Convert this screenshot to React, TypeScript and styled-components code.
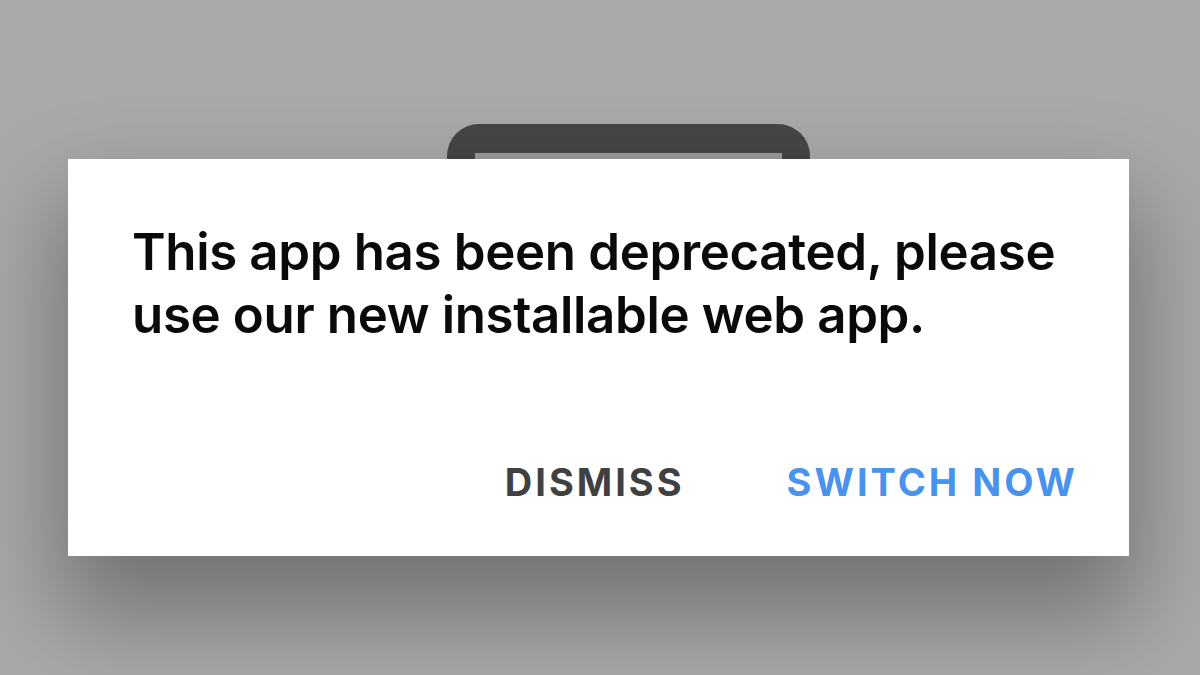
import React from "react";
import styled, { createGlobalStyle } from "styled-components";

const Global = createGlobalStyle`
  html, body { margin: 0; padding: 0; }
  body { width: 1200px; height: 675px; overflow: hidden; background: #a9a9a9; }
`;

const Page = styled.div`
  position: relative;
  width: 1200px;
  height: 675px;
  background: #a9a9a9;
  display: flex;
  justify-content: flex-start;
  align-items: flex-start;
  padding-left: 447px;
  padding-top: 124px;
  box-sizing: border-box;
  overflow: hidden;
`;

const Phone = styled.div`
  width: 363px;
  height: 120px;
  background: #464646;
  border-radius: 32px 32px 0 0;
  padding: 29px 28px 0 28px;
  box-sizing: border-box;
  display: flex;
`;

const Screen = styled.div`
  flex: 1;
  background: #9b9b9b;
`;

const Dialog = styled.div`
  position: absolute;
  left: 68px;
  top: 159px;
  width: 1061px;
  height: 397px;
  background: #ffffff;
  box-shadow: 0 50px 90px 10px rgba(0, 0, 0, 0.32);
  display: flex;
  flex-direction: column;
  justify-content: space-between;
  box-sizing: border-box;
  padding: 61px 51px 52px 64px;
  font-family: Inter, "Noto Sans", sans-serif;
`;

const Message = styled.p`
  margin: 0;
  font-size: 51px;
  line-height: 63px;
  font-weight: 600;
  color: #0a0a0a;
  letter-spacing: -0.35px;
  white-space: nowrap;
`;

const Actions = styled.div`
  display: flex;
  justify-content: flex-end;
  align-items: center;
  gap: 102px;
`;

const ActionButton = styled.button<{ $primary?: boolean }>`
  border: none;
  background: none;
  padding: 0;
  margin: 0;
  font-family: Inter, "Noto Sans", sans-serif;
  font-size: 38px;
  line-height: 44px;
  font-weight: 700;
  letter-spacing: 3px;
  color: ${(p) => (p.$primary ? "#4a93ec" : "#404040")};
  cursor: pointer;
`;

export default function App() {
  return (
    <>
      <Global />
      <Page>
        <Phone>
          <Screen />
        </Phone>
        <Dialog>
          <Message>
            This app has been deprecated, please
            <br />
            use our new installable web app.
          </Message>
          <Actions>
            <ActionButton>DISMISS</ActionButton>
            <ActionButton $primary>SWITCH NOW</ActionButton>
          </Actions>
        </Dialog>
      </Page>
    </>
  );
}
